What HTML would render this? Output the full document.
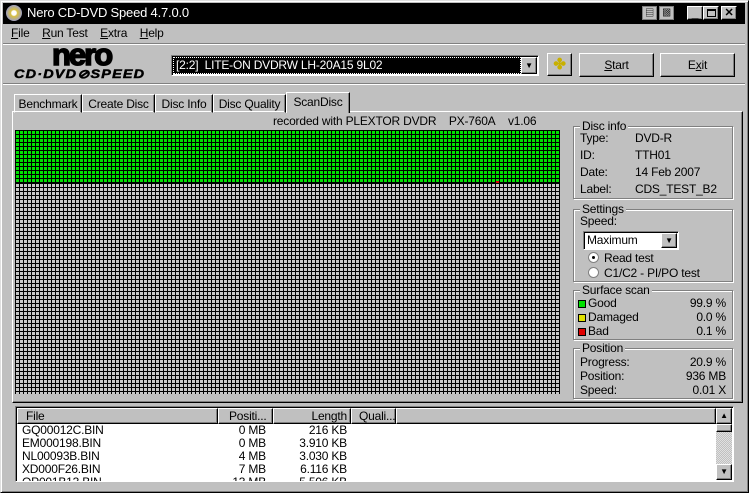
<!DOCTYPE html>
<html><head><meta charset="utf-8"><style>
*{margin:0;padding:0;box-sizing:border-box}
body{width:749px;height:493px;background:#c0c0c0;font:12px "Liberation Sans","Noto Sans CJK JP",sans-serif;color:#000;position:relative;overflow:hidden;letter-spacing:-0.2px}
.a{position:absolute}
.raised{border:1px solid;border-color:#fff #000 #000 #fff;box-shadow:inset -1px -1px #808080}
.sunk{border:1px solid;border-color:#808080 #fff #fff #808080;box-shadow:inset 1px 1px #000}
.grp{position:absolute;border:1px solid #808080;box-shadow:1px 1px #fff, inset 1px 1px #fff}
.grp .t{position:absolute;top:-8px;left:6px;background:#c0c0c0;padding:0 2px;line-height:14px}
.tab{position:absolute;top:94px;height:19px;border:1px solid;border-color:#fff #000 transparent #fff;box-shadow:inset -1px 0 #808080;padding:2px 0 0;line-height:14px;white-space:nowrap;text-align:center;overflow:hidden}
u{text-decoration:underline}
.row{position:absolute;left:6px;line-height:14px}
.r{position:absolute;right:6px;line-height:14px}
.sq{display:inline-block;width:8px;height:8px;border:1px solid #000;margin-right:2px;vertical-align:-1px}
</style></head><body>
<div class="a" style="left:0;top:0;width:749px;height:493px;border:1px solid;border-color:#dfdfdf #000 #000 #dfdfdf;box-shadow:inset 1px 1px #fff,inset -1px -1px #808080"></div>
<div class="a" style="left:3px;top:3px;width:742px;height:21px;background:#000"></div>
<div class="a" style="left:6px;top:5px;width:16px;height:16px;border-radius:50%;background:radial-gradient(circle,#fff 20%,#d8c040 30%,#a0a0c0 70%,#606080)"></div>
<div class="a" style="left:27px;top:5px;color:#fff;font-size:13px;line-height:16px">Nero CD-DVD Speed 4.7.0.0</div>
<div class="a" style="left:642px;top:6px;width:15px;height:14px;background:#c0c0c0;border:1px solid #808080;font-size:9px;text-align:center;line-height:12px">&#9636;</div>
<div class="a" style="left:659px;top:6px;width:15px;height:14px;background:#c0c0c0;border:1px solid #808080;font-size:9px;text-align:center;line-height:12px">&#9641;</div>
<div class="a raised" style="left:687px;top:6px;width:16px;height:14px;background:#c0c0c0;font-weight:bold;text-align:center;line-height:12px">_</div>
<div class="a raised" style="left:703px;top:6px;width:16px;height:14px;background:#c0c0c0"><div class="a" style="left:3px;top:2px;width:9px;height:8px;border:1px solid #000;border-top-width:2px"></div></div>
<div class="a raised" style="left:721px;top:6px;width:16px;height:14px;background:#c0c0c0;font-weight:bold;text-align:center;line-height:12px;font-size:11px">✕</div>
<div class="a" style="left:11px;top:25px;line-height:16px;font-size:12px"><u>F</u>ile&nbsp;&nbsp;&nbsp;&nbsp;<u>R</u>un Test&nbsp;&nbsp;&nbsp;&nbsp;<u>E</u>xtra&nbsp;&nbsp;&nbsp;&nbsp;<u>H</u>elp</div>
<div class="a" style="left:3px;top:43px;width:742px;height:2px;border-top:1px solid #808080;border-bottom:1px solid #fff"></div>
<div class="a" style="left:52px;top:40px;font:bold 31px/30px 'Liberation Sans',sans-serif;letter-spacing:-2px;-webkit-text-stroke:1.5px #000">nero</div>
<div class="a" style="left:14px;top:68px;font:italic bold 12px/12px 'Liberation Sans',sans-serif;letter-spacing:1px;transform:scaleX(1.2);transform-origin:left;-webkit-text-stroke:0.5px #000">CD·DVD⊘SPEED</div>
<div class="a sunk" style="left:171px;top:55px;width:368px;height:21px;background:#fff"></div>
<div class="a" style="left:173px;top:57px;width:348px;height:17px;background:#000;color:#fff;line-height:17px;padding-left:3px;outline:1px dotted #fff;outline-offset:-1px">[2:2]&nbsp; LITE-ON DVDRW LH-20A15 9L02</div>
<div class="a raised" style="left:521px;top:57px;width:16px;height:17px;background:#c0c0c0;font-size:8px;text-align:center;line-height:15px">▼</div>
<div class="a raised" style="left:547px;top:53px;width:25px;height:23px;text-align:center;line-height:21px;color:#c8b000;font-weight:bold;font-size:15px">✤</div>
<div class="a raised" style="left:579px;top:53px;width:75px;height:24px;text-align:center;line-height:22px"><u>S</u>tart</div>
<div class="a raised" style="left:660px;top:53px;width:75px;height:24px;text-align:center;line-height:22px">E<u>x</u>it</div>
<div class="a" style="left:3px;top:83px;width:742px;height:2px;border-top:1px solid #808080;border-bottom:1px solid #fff"></div>
<div class="a" style="left:12px;top:111px;width:731px;height:292px;border:1px solid;border-color:#fff #000 #000 #fff;box-shadow:inset -1px -1px #808080"></div>
<div class="tab" style="left:14px;width:68px">Benchmark</div>
<div class="tab" style="left:82px;width:73px">Create Disc</div>
<div class="tab" style="left:155px;width:58px">Disc Info</div>
<div class="tab" style="left:213px;width:73px">Disc Quality</div>
<div class="tab" style="left:286px;top:92px;height:21px;width:64px;background:#c0c0c0;border-bottom:none">ScanDisc</div>
<div class="a" style="left:273px;top:114px;line-height:14px">recorded with PLEXTOR DVDR&nbsp;&nbsp;&nbsp; PX-760A&nbsp;&nbsp;&nbsp; v1.06</div>
<div class="a" style="left:15px;top:130px;width:545px;height:53px;background-color:#00e000;background-image:linear-gradient(90deg,#000 1px,transparent 1px),linear-gradient(#000 1px,transparent 1px);background-size:4px 4px"></div>
<div class="a" style="left:15px;top:183px;width:545px;height:211px;background-color:#c8c8c8;background-image:linear-gradient(90deg,#000 1px,transparent 1px),linear-gradient(#000 1px,transparent 1px);background-size:4px 4px"></div>
<div class="a" style="left:496px;top:181px;width:3px;height:2px;background:#e00000"></div>
<div class="grp" style="left:573px;top:126px;width:160px;height:73px"><span class="t">Disc info</span>
<div class="row" style="top:4px">Type:</div><div class="row" style="top:4px;left:61px">DVD-R</div>
<div class="row" style="top:21px">ID:</div><div class="row" style="top:21px;left:61px">TTH01</div>
<div class="row" style="top:38px">Date:</div><div class="row" style="top:38px;left:61px">14 Feb 2007</div>
<div class="row" style="top:55px">Label:</div><div class="row" style="top:55px;left:61px">CDS_TEST_B2</div></div>
<div class="grp" style="left:573px;top:209px;width:160px;height:73px"><span class="t">Settings</span>
<div class="row" style="top:4px">Speed:</div>
<div class="a sunk" style="left:9px;top:21px;width:96px;height:19px;background:#fff;padding-left:3px;line-height:16px">Maximum</div>
<div class="a raised" style="left:87px;top:23px;width:16px;height:15px;background:#c0c0c0;font-size:8px;text-align:center;line-height:13px">▼</div>
<div class="a" style="left:14px;top:42px;width:11px;height:11px;border-radius:50%;background:#fff;border:1px solid #808080"><div class="a" style="left:3px;top:3px;width:3px;height:3px;background:#000;border-radius:50%"></div></div>
<div class="row" style="top:41px;left:30px">Read test</div>
<div class="a" style="left:14px;top:57px;width:11px;height:11px;border-radius:50%;background:#fff;border:1px solid #808080"></div>
<div class="row" style="top:56px;left:30px">C1/C2 - PI/PO test</div></div>
<div class="grp" style="left:573px;top:290px;width:160px;height:50px"><span class="t">Surface scan</span>
<div class="row" style="top:5px;left:4px"><span class="sq" style="background:#00e000"></span>Good</div><div class="r" style="top:5px">99.9 %</div>
<div class="row" style="top:19px;left:4px"><span class="sq" style="background:#e0e000"></span>Damaged</div><div class="r" style="top:19px">0.0 %</div>
<div class="row" style="top:33px;left:4px"><span class="sq" style="background:#e00000"></span>Bad</div><div class="r" style="top:33px">0.1 %</div></div>
<div class="grp" style="left:573px;top:348px;width:160px;height:51px"><span class="t">Position</span>
<div class="row" style="top:6px">Progress:</div><div class="r" style="top:6px">20.9 %</div>
<div class="row" style="top:20px">Position:</div><div class="r" style="top:20px">936 MB</div>
<div class="row" style="top:34px">Speed:</div><div class="r" style="top:34px">0.01 X</div></div>
<div class="a sunk" style="left:15px;top:406px;width:719px;height:76px;background:#fff;overflow:hidden">
<div class="a raised" style="left:1px;top:1px;width:201px;height:16px;background:#c0c0c0;padding-left:8px;line-height:14px">File</div>
<div class="a raised" style="left:202px;top:1px;width:55px;height:16px;background:#c0c0c0;padding-left:10px;line-height:14px;overflow:hidden;white-space:nowrap">Positi...</div>
<div class="a raised" style="left:257px;top:1px;width:78px;height:16px;background:#c0c0c0;text-align:right;padding-right:3px;line-height:14px">Length</div>
<div class="a raised" style="left:335px;top:1px;width:45px;height:16px;background:#c0c0c0;padding-left:7px;line-height:14px;overflow:hidden;white-space:nowrap">Quali...</div>
<div class="a raised" style="left:380px;top:1px;width:320px;height:16px;background:#c0c0c0"></div>
<div class="a" style="left:6px;top:17px;line-height:13px">GQ00012C.BIN<br>EM000198.BIN<br>NL00093B.BIN<br>XD000F26.BIN<br>QP001B13.BIN</div>
<div class="a" style="left:200px;top:17px;width:50px;text-align:right;line-height:13px">0 MB<br>0 MB<br>4 MB<br>7 MB<br>13 MB</div>
<div class="a" style="left:260px;top:17px;width:71px;text-align:right;line-height:13px">216 KB<br>3.910 KB<br>3.030 KB<br>6.116 KB<br>5.506 KB</div>
<div class="a" style="left:700px;top:1px;width:16px;height:72px;background-color:#e0e0e0;background-image:linear-gradient(45deg,#c0c0c0 25%,transparent 25%,transparent 75%,#c0c0c0 75%),linear-gradient(45deg,#c0c0c0 25%,transparent 25%,transparent 75%,#c0c0c0 75%);background-size:2px 2px;background-position:0 0,1px 1px"></div>
<div class="a raised" style="left:700px;top:1px;width:16px;height:16px;background:#c0c0c0;font-size:8px;text-align:center;line-height:14px">▲</div>
<div class="a raised" style="left:700px;top:17px;width:16px;height:8px;background:#c0c0c0"></div>
<div class="a raised" style="left:700px;top:57px;width:16px;height:16px;background:#c0c0c0;font-size:8px;text-align:center;line-height:14px">▼</div>
</div>
</body></html>
